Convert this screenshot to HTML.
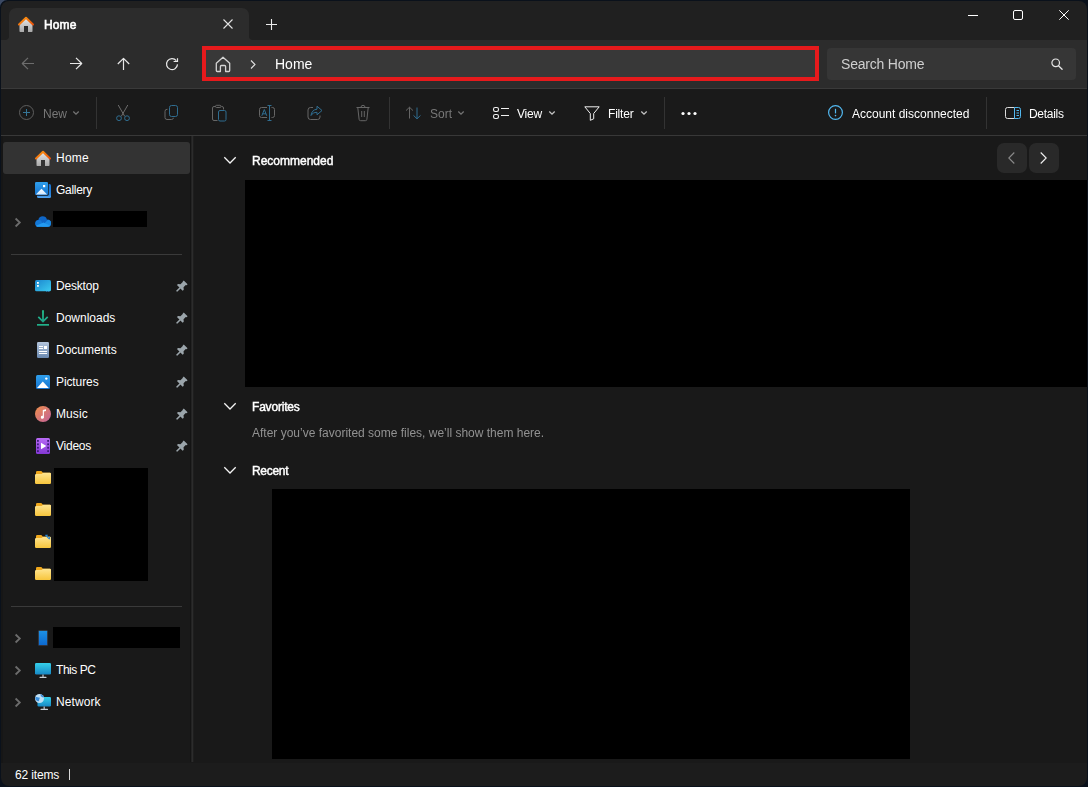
<!DOCTYPE html>
<html><head><meta charset="utf-8"><title>Home</title>
<style>
*{box-sizing:border-box;margin:0;padding:0}
html,body{width:1088px;height:787px;overflow:hidden;background:#191919;font-family:"Liberation Sans",sans-serif;color:#fff}
.win{position:absolute;left:0;top:0;width:1088px;height:787px;background:#191919;overflow:hidden}
.t{position:absolute;white-space:nowrap;line-height:16px;font-size:12px;color:#fff;height:16px}
.b{-webkit-text-stroke:.45px #fff}
svg{position:absolute;overflow:visible}
.titlebar{position:absolute;left:0;top:0;width:1088px;height:40px;background:#202020}
.tab{position:absolute;left:9px;top:8px;width:240px;height:32px;background:#2c2c2c;border-radius:7px 7px 0 0}
.navrow{position:absolute;left:0;top:40px;width:1088px;height:48px;background:#2c2c2c}
.addr{position:absolute;left:202px;top:46px;width:617px;height:35px;background:#383838;border:4px solid #e61a1c}
.search{position:absolute;left:827px;top:48px;width:249px;height:32px;background:#363636;border-radius:4px}
.cmd{position:absolute;left:0;top:88px;width:1088px;height:48px;background:#1a1a1a}
.vsep{position:absolute;width:1px;top:97px;height:32px;background:#333}
.sdiv{position:absolute;left:190px;top:136px;width:4px;height:626px;background:linear-gradient(90deg,#232323 0 1px,#2c2c2c 1px 2px,#1e1e1e 2px 3px);border-left:1px solid #141414}
.sel{position:absolute;left:3px;top:142px;width:187px;height:31.5px;background:#333;border-radius:3px}
.hsep{position:absolute;left:11px;width:171px;height:1px;background:#3a3a3a}
.black{position:absolute;background:#000}
.status{position:absolute;left:0;top:763px;width:1088px;height:24px;background:#1c1c1c}
.nbtn{position:absolute;top:143px;width:30px;height:30px;background:#292929;border-radius:7px}
.frame{position:absolute;left:1px;top:1px;width:1086px;height:785px;border-radius:8px;box-shadow:0 0 0 12px #0a111b;pointer-events:none}
.gs{will-change:transform}
.g{color:#787878}
</style></head><body>
<div class="win">

<!-- title bar -->
<div class="titlebar"></div>
<div class="tab"></div>
<svg style="left:5px;top:36px" width="4" height="4" viewBox="0 0 4 4"><path d="M4 0v4H0a4 4 0 0 0 4-4z" fill="#2c2c2c"/></svg>
<svg style="left:249px;top:36px" width="4" height="4" viewBox="0 0 4 4"><path d="M0 0v4h4a4 4 0 0 1-4-4z" fill="#2c2c2c"/></svg>
<!-- tab home icon -->
<svg style="left:18px;top:16px" width="16" height="16" viewBox="0 0 16 16">
<defs><linearGradient id="hg" x1="0" y1="0" x2="0" y2="1"><stop offset="0" stop-color="#e6e6e6"/><stop offset="1" stop-color="#a9a9a9"/></linearGradient>
<linearGradient id="ho" x1="0" y1="0" x2="1" y2="1"><stop offset="0" stop-color="#ff9a10"/><stop offset="1" stop-color="#e8500a"/></linearGradient></defs>
<path d="M1.500 8.500L8 2.300l6.500 6.200v6.700a.8.800 0 0 1-.8.800H10V10H6v6H2.300a.8.800 0 0 1-.8-.8z" fill="url(#hg)"/>
<path d="M1 8.500L8 1.800l7 6.700" fill="none" stroke="url(#ho)" stroke-width="2" stroke-linecap="round" stroke-linejoin="round"/>
</svg>
<div class="t gs b" id="tabtxt" style="left:44px;top:17px;-webkit-text-stroke:.6px #fff;letter-spacing:.1px">Home</div>
<svg style="left:223px;top:19px" width="10" height="10" viewBox="0 0 10 10"><path d="M.5.5l9 9M9.500.5l-9 9" stroke="#e4e4e4" stroke-width="1.100" fill="none"/></svg>
<svg style="left:266px;top:19px" width="11" height="11" viewBox="0 0 11 11"><path d="M5.500 0v11M0 5.500h11" stroke="#ececec" stroke-width="1.100" fill="none"/></svg>
<!-- window controls -->
<svg style="left:968px;top:15px" width="10" height="1" viewBox="0 0 10 1"><rect width="10" height="1" fill="#fff"/></svg>
<svg style="left:1013px;top:10px" width="10" height="10" viewBox="0 0 10 10"><rect x=".5" y=".5" width="9" height="9" rx="1.500" fill="none" stroke="#fff" stroke-width="1"/></svg>
<svg style="left:1059px;top:10px" width="10" height="10" viewBox="0 0 10 10"><path d="M.3.300l9.400 9.400M9.700.3L.3 9.700" stroke="#fff" stroke-width="1" fill="none"/></svg>

<!-- nav row -->
<div class="navrow"></div>
<svg style="left:22px;top:58px" width="12" height="12" viewBox="0 0 12 12"><path d="M12 5.500H.5M6 -.2L.3 5.500 6 11.200" stroke="#6d6d6d" stroke-width="1.200" fill="none" stroke-linejoin="round"/></svg>
<svg style="left:70px;top:58px" width="12" height="12" viewBox="0 0 12 12"><path d="M0 5.500h11.500M6 -.2l5.700 5.700L6 11.200" stroke="#e8e8e8" stroke-width="1.200" fill="none" stroke-linejoin="round"/></svg>
<svg style="left:118px;top:58px" width="12" height="12" viewBox="0 0 12 12"><path d="M5.500 12V.5M-.2 6L5.500 .3 11.200 6" stroke="#e8e8e8" stroke-width="1.200" fill="none" stroke-linejoin="round"/></svg>
<svg style="left:166px;top:58px" width="12" height="12" viewBox="0 0 12 12"><path d="M11.500 6.400A5.500 5.500 0 1 1 10.300 2.600M11.500 .2V3.500H7.600" stroke="#e8e8e8" stroke-width="1.200" fill="none"/></svg>
<div class="addr"></div>
<svg style="left:215px;top:56px" width="16" height="16" viewBox="0 0 16 16"><path d="M1.300 7.200L8 1.300l6.700 5.900v7.300a1 1 0 0 1-1 1H10.600V10.500a1 1 0 0 0-1-1H6.400a1 1 0 0 0-1 1v5H2.300a1 1 0 0 1-1-1z" fill="none" stroke="#d4d4d4" stroke-width="1.300" stroke-linejoin="round"/></svg>
<svg style="left:250px;top:60px" width="6" height="9" viewBox="0 0 6 9"><path d="M1 .5l4 4-4 4" stroke="#e0e0e0" stroke-width="1.100" fill="none"/></svg>
<div class="t gs" id="addrtxt" style="left:275px;top:55px;font-size:14px;line-height:18px;height:18px">Home</div>
<div class="search"></div>
<div class="t gs" id="srchtxt" style="left:841px;top:55px;font-size:14px;line-height:18px;height:18px;color:#cfcfcf;letter-spacing:-0.2px">Search Home</div>
<svg style="left:1051px;top:58px" width="12" height="12" viewBox="0 0 12 12"><circle cx="4.700" cy="4.800" r="3.800" fill="none" stroke="#e6e6e6" stroke-width="1.200"/><path d="M7.500 7.700l3.600 3.600" stroke="#e6e6e6" stroke-width="1.300" stroke-linecap="round"/></svg>

<!-- command bar -->
<div class="cmd"></div>
<div class="abs" style="position:absolute;left:1px;top:88px;width:1086px;height:1px;background:#3a3a3a"></div>
<div class="abs" style="position:absolute;left:1px;top:135px;width:1086px;height:1px;background:#383838"></div>

<svg style="left:19px;top:105px" width="15" height="15" viewBox="0 0 15 15"><circle cx="7.500" cy="7.500" r="7" fill="none" stroke="#5e5e5e" stroke-width="1"/><path d="M7.500 4v7M4 7.500h7" stroke="#357596" stroke-width="1"/></svg>
<div class="t gs g" id="newtxt" style="left:43px;top:106px">New</div>
<svg style="left:73px;top:111px" width="6" height="4" viewBox="0 0 6 4"><path d="M.3.500L3 3.200 5.700.5" stroke="#747474" stroke-width="1.300" fill="none"/></svg>
<div class="vsep" style="left:96px"></div>
<!-- cut -->
<svg style="left:115px;top:104px" width="16" height="18" viewBox="0 0 16 18"><path d="M3.200 1L9.700 12.300M12.800 1L6.300 12.300" stroke="#6c6c6c" stroke-width="1" fill="none"/><circle cx="4" cy="14.200" r="2.400" fill="none" stroke="#2f6d90" stroke-width="1"/><circle cx="12" cy="14.200" r="2.400" fill="none" stroke="#2f6d90" stroke-width="1"/></svg>
<!-- copy -->
<svg style="left:164px;top:105px" width="15" height="15" viewBox="0 0 15 15"><path d="M3.500 4.300H3a2 2 0 0 0-2 2v6.200a2 2 0 0 0 2 2h4.500a2 2 0 0 0 2-1.700" fill="none" stroke="#666" stroke-width="1"/><rect x="5.500" y=".5" width="8" height="11" rx="2" fill="none" stroke="#2f6d90" stroke-width="1"/></svg>
<!-- paste -->
<svg style="left:211px;top:104px" width="16" height="18" viewBox="0 0 16 18"><path d="M6.500 16.500H3a1.500 1.500 0 0 1-1.500-1.500V4A1.500 1.500 0 0 1 3 2.500h1.500M10.500 2.500H11A1.500 1.500 0 0 1 12.500 4v1.500" fill="none" stroke="#666" stroke-width="1"/><rect x="4.500" y="1.300" width="5.500" height="2.200" rx="1.100" fill="none" stroke="#666" stroke-width="1"/><rect x="7.500" y="6.500" width="7.500" height="10.500" rx="1.500" fill="none" stroke="#2f6d90" stroke-width="1"/></svg>
<!-- rename -->
<svg style="left:258px;top:104px" width="18" height="18" viewBox="0 0 18 18"><path d="M9 3.500H3.500A2 2 0 0 0 1.500 5.500v6a2 2 0 0 0 2 2H9M13.500 3.500h1a2 2 0 0 1 2 2v6a2 2 0 0 1-2 2h-1" fill="none" stroke="#666" stroke-width="1"/><path d="M11.500 1.500v15M9.500 1.500h4M9.500 16.500h4" stroke="#2f6d90" stroke-width="1" fill="none"/><path d="M3.800 11.800L6.300 5.500 8.800 11.800M4.600 9.800h3.400" stroke="#2f6d90" stroke-width="1" fill="none"/></svg>
<!-- share -->
<svg style="left:307px;top:105px" width="16" height="16" viewBox="0 0 16 16"><path d="M6 2.500H3.500A2.500 2.500 0 0 0 1 5v7a2.500 2.500 0 0 0 2.500 2.500h7A2.500 2.500 0 0 0 13 12v-1.500" fill="none" stroke="#666" stroke-width="1"/><path d="M10 1.200l5 4.300-5 4.300V7.300C7 7.300 5.200 8.500 4 10.500c.3-3.500 2.500-6 6-6.300z" fill="none" stroke="#2f6d90" stroke-width="1" stroke-linejoin="round"/></svg>
<!-- delete -->
<svg style="left:356px;top:104px" width="14" height="18" viewBox="0 0 14 18"><path d="M.5 3.500h13M5 3.300a2 2 0 0 1 4 0M1.800 3.800l1.300 11.500a1.500 1.500 0 0 0 1.500 1.400h4.800a1.500 1.500 0 0 0 1.500-1.400L12.200 3.800" fill="none" stroke="#666" stroke-width="1"/><path d="M5.700 7v6M8.300 7v6" stroke="#666" stroke-width="1"/></svg>
<div class="vsep" style="left:389px"></div>
<!-- sort -->
<svg style="left:405px;top:106px" width="17" height="14" viewBox="0 0 17 14"><path d="M4.500 12.500V1.200M1 4.600L4.500 1.200 8 4.600" stroke="#666" stroke-width="1" fill="none"/><path d="M12 1.500v11.300M8.500 9.400L12 12.800l3.500-3.400" stroke="#2f6d90" stroke-width="1" fill="none"/></svg>
<div class="t gs g" id="sorttxt" style="left:430px;top:106px">Sort</div>
<svg style="left:458px;top:111px" width="6" height="4" viewBox="0 0 6 4"><path d="M.3.500L3 3.200 5.700.5" stroke="#747474" stroke-width="1.300" fill="none"/></svg>
<!-- view -->
<svg style="left:493px;top:107px" width="16" height="12" viewBox="0 0 16 12"><rect x=".5" y=".5" width="5" height="4" rx="1.700" fill="none" stroke="#f0f0f0" stroke-width="1.100"/><rect x=".5" y="7.500" width="5" height="4" rx="1.700" fill="none" stroke="#f0f0f0" stroke-width="1.100"/><path d="M8 1.500h8M8 8.500h8" stroke="#f0f0f0" stroke-width="1"/></svg>
<div class="t gs" id="viewtxt" style="left:517px;top:106px;letter-spacing:-0.25px">View</div>
<svg style="left:549px;top:111px" width="6" height="4" viewBox="0 0 6 4"><path d="M.3.500L3 3.200 5.700.5" stroke="#c4c4c4" stroke-width="1.300" fill="none"/></svg>
<!-- filter -->
<svg style="left:584px;top:106px" width="16" height="15" viewBox="0 0 16 15"><path d="M.8.800h14.400L9.700 7.500v5.300l-3.400 1.500V7.500z" fill="none" stroke="#f0f0f0" stroke-width="1" stroke-linejoin="round"/></svg>
<div class="t gs" id="filttxt" style="left:608px;top:106px;letter-spacing:-0.2px">Filter</div>
<svg style="left:641px;top:111px" width="6" height="4" viewBox="0 0 6 4"><path d="M.3.500L3 3.200 5.700.5" stroke="#c4c4c4" stroke-width="1.300" fill="none"/></svg>
<div class="vsep" style="left:664px"></div>
<svg style="left:681px;top:112px" width="16" height="3" viewBox="0 0 16 3"><circle cx="2" cy="1.500" r="1.600" fill="#fff"/><circle cx="8" cy="1.500" r="1.600" fill="#fff"/><circle cx="14" cy="1.500" r="1.600" fill="#fff"/></svg>
<!-- account -->
<svg style="left:828px;top:105px" width="15" height="15" viewBox="0 0 15 15"><circle cx="7.500" cy="7.500" r="6.900" fill="none" stroke="#52b8f0" stroke-width="1.200"/><path d="M7.500 3.800v4.600" stroke="#52b8f0" stroke-width="1.200"/><circle cx="7.500" cy="10.600" r=".8" fill="#52b8f0"/></svg>
<div class="t gs" id="acctxt" style="left:852px;top:106px">Account disconnected</div>
<div class="vsep" style="left:986px"></div>
<!-- details -->
<svg style="left:1005px;top:107px" width="16" height="12" viewBox="0 0 16 12"><path d="M9.500.5H2.500A2 2 0 0 0 .5 2.500v7a2 2 0 0 0 2 2h7" fill="none" stroke="#dcdcdc" stroke-width="1"/><path d="M9.500.5h4a2 2 0 0 1 2 2v7a2 2 0 0 1-2 2h-4z" fill="none" stroke="#52b8f0" stroke-width="1"/><path d="M11.500 3.500h2.500M11.500 6h2.500M11.500 8.500h2.500" stroke="#52b8f0" stroke-width="1"/></svg>
<div class="t gs" id="dettxt" style="left:1029px;top:106px;letter-spacing:-0.3px">Details</div>

<!-- sidebar -->
<div class="sdiv"></div>
<div style="position:absolute;left:1px;top:136px;width:2px;height:627px;background:#161616"></div>
<div class="sel"></div>
<div class="hsep" style="top:254px"></div>
<div class="hsep" style="top:606px"></div>

<div class="t" style="left:56px;top:150px;letter-spacing:.25px">Home</div>
<div class="t" style="left:56px;top:182px;letter-spacing:-0.3px">Gallery</div>
<div class="t" style="left:56px;top:278px;letter-spacing:-0.2px">Desktop</div>
<div class="t" style="left:56px;top:310px">Downloads</div>
<div class="t" style="left:56px;top:342px">Documents</div>
<div class="t" style="left:56px;top:374px;letter-spacing:-0.1px">Pictures</div>
<div class="t" style="left:56px;top:406px;letter-spacing:0.1px">Music</div>
<div class="t" style="left:56px;top:438px;letter-spacing:-0.25px">Videos</div>
<div class="t" style="left:56px;top:662px;letter-spacing:-0.45px">This PC</div>
<div class="t" style="left:56px;top:694px;letter-spacing:0.1px">Network</div>

<!-- sidebar icons -->
<svg width="0" height="0" style="left:0;top:0"><defs>
<linearGradient id="gfold" x1="0" y1="0" x2="0" y2="1"><stop offset="0" stop-color="#ffe591"/><stop offset="1" stop-color="#f7c53c"/></linearGradient>
<linearGradient id="gdesk" x1="0" y1="0" x2="1" y2="1"><stop offset="0" stop-color="#1b86cf"/><stop offset="1" stop-color="#3ccbef"/></linearGradient>
<linearGradient id="gdl" x1="0" y1="0" x2="0" y2="1"><stop offset="0" stop-color="#23cf97"/><stop offset="1" stop-color="#1e9f86"/></linearGradient>
<linearGradient id="gdoc" x1="0" y1="0" x2="0" y2="1"><stop offset="0" stop-color="#b4c5dc"/><stop offset="1" stop-color="#6a89b0"/></linearGradient>
<linearGradient id="gpic" x1="0" y1="0" x2="0" y2="1"><stop offset="0" stop-color="#2f9fec"/><stop offset="1" stop-color="#1674cf"/></linearGradient>
<linearGradient id="gmus" x1="0" y1="0" x2="1" y2="1"><stop offset="0" stop-color="#f0904a"/><stop offset="1" stop-color="#c0609c"/></linearGradient>
<linearGradient id="gvid" x1="0" y1="0" x2="0" y2="1"><stop offset="0" stop-color="#b86af5"/><stop offset="1" stop-color="#8438d4"/></linearGradient>
<linearGradient id="gpc" x1="0" y1="0" x2="0" y2="1"><stop offset="0" stop-color="#35d0ea"/><stop offset="1" stop-color="#1788c6"/></linearGradient>
<linearGradient id="gph" x1="0" y1="0" x2="0" y2="1"><stop offset="0" stop-color="#1d92e6"/><stop offset="1" stop-color="#0c68cf"/></linearGradient>
<linearGradient id="gcl" x1="0" y1="0" x2="0" y2="1"><stop offset="0" stop-color="#0f6fd0"/><stop offset="1" stop-color="#1f9ae8"/></linearGradient>
<g id="pin"><path d="M7.300 .4l3.600 3.600-.9 .9-.8-.1-2.100 2.100 .2 2.300-1 1-2.500-2.500L.7 10.800l-.4-.4 3.100-3.100L.9 4.800l1-1 2.300 .2L6.300 1.900 6.400 1.300z" fill="#9ba5ab"/><path d="M.7 10.600L4 7.300" stroke="#9ba5ab" stroke-width="1.300"/></g>
<g id="fold"><path d="M1 1.200A1.200 1.200 0 0 1 2.200 0H6.300L8 1.800H14.800A1.200 1.200 0 0 1 16 3V4H1z" fill="#f0a81c"/><path d="M0 4.200A1.200 1.200 0 0 1 1.200 3H6.500L8.200 1.800H14.800A1.200 1.200 0 0 1 16 3v8.800A1.200 1.200 0 0 1 14.800 13H1.200A1.200 1.200 0 0 1 0 11.800z" fill="url(#gfold)"/></g>
<g id="chv"><path d="M.6 .5L4.800 4.500 .6 8.500" stroke="#6c6c6c" stroke-width="1.800" fill="none"/></g>
<g id="chd"><path d="M.3.300L6 6 11.700.3" stroke="#f4f4f4" stroke-width="1.300" fill="none"/></g>
</defs></svg>

<!-- Home -->
<svg style="left:35px;top:150px" width="16" height="16" viewBox="0 0 16 16"><path d="M1.500 8.500L8 2.300l6.500 6.200v6.700a.8.800 0 0 1-.8.800H10V10H6v6H2.300a.8.800 0 0 1-.8-.8z" fill="url(#hg)"/><path d="M1 8.500L8 1.800l7 6.700" fill="none" stroke="url(#ho)" stroke-width="2" stroke-linecap="round" stroke-linejoin="round"/></svg>
<!-- Gallery -->
<svg style="left:35px;top:182px" width="16" height="16" viewBox="0 0 16 16"><defs><linearGradient id="gback" x1="0" y1="0" x2="0" y2="1"><stop offset="0" stop-color="#1672d2"/><stop offset=".8" stop-color="#2a86de"/><stop offset="1" stop-color="#58a6ee"/></linearGradient><linearGradient id="gmnt" x1="0" y1="0" x2="0" y2="1"><stop offset="0" stop-color="#fff"/><stop offset="1" stop-color="#cfe6fb"/></linearGradient></defs><rect x="2" y="2" width="14" height="14" rx="1.500" fill="url(#gback)"/><rect x="0" y="0" width="13.700" height="13.700" rx="1.500" fill="#191919"/><rect x="0" y="0" width="13" height="13" rx="1.300" fill="url(#gpic)"/><path d="M.8 12.500L6.500 6.800 12.200 12.500z" fill="url(#gmnt)"/><rect x="8" y="3" width="2.200" height="2.200" fill="#fff"/></svg>
<!-- OneDrive -->
<svg style="left:35px;top:216px" width="16" height="11" viewBox="0 0 16 11"><defs><clipPath id="cl"><circle cx="3.600" cy="7.400" r="3.400"/><circle cx="7.700" cy="4.700" r="4.400"/><circle cx="12.400" cy="7.200" r="3.600"/><rect x="3.600" y="6" width="8.800" height="4.800"/></clipPath></defs><g clip-path="url(#cl)"><rect width="16" height="11" fill="#0f66c6"/><circle cx="3.600" cy="7.400" r="3.400" fill="#1478d6"/><path d="M6 11L13 3.500l4 2V11z" fill="#1a88e2"/><path d="M0 11L1.500 9.500 8.500 6.500 15.500 10 16 11z" fill="#239af0"/></g></svg>
<svg style="left:15px;top:218px" width="6" height="10" viewBox="0 0 6 10"><use href="#chv"/></svg>
<!-- Desktop -->
<svg style="left:35px;top:280px" width="16" height="12" viewBox="0 0 16 12"><rect width="16" height="11.300" rx="1.500" fill="url(#gdesk)"/><rect x="2" y="2" width="1.800" height="1.800" fill="#fff"/><rect x="2" y="5" width="1.800" height="1.800" fill="#fff"/><rect x="11.300" y="11" width="1" height="1" fill="#2a7fc0"/><rect x="13.300" y="11" width="1" height="1" fill="#2a7fc0"/></svg>
<!-- Downloads -->
<svg style="left:37px;top:310px" width="12" height="16" viewBox="0 0 12 16"><path d="M6 .3v11M1.300 6.800L6 11.500l4.700-4.700" stroke="url(#gdl)" stroke-width="1.700" fill="none"/><rect x="0" y="14" width="12" height="1.700" fill="#21b08a"/></svg>
<!-- Documents -->
<svg style="left:37px;top:342px" width="12" height="16" viewBox="0 0 12 16"><rect width="12" height="16" rx="1.200" fill="url(#gdoc)"/><path d="M2 4.500h4M2 6.500h4M2 9.500h8M2 11.500h8" stroke="#fff" stroke-width="1"/><rect x="7" y="4" width="3" height="3" fill="#fff"/></svg>
<!-- Pictures -->
<svg style="left:36px;top:375px" width="14" height="14" viewBox="0 0 14 14"><rect width="14" height="14" rx="1.500" fill="url(#gpic)"/><path d="M1 13l5.800-6.500L12.800 13z" fill="#fff"/><circle cx="10.300" cy="3.600" r="1.200" fill="#fff"/></svg>
<!-- Music -->
<svg style="left:35px;top:406px" width="16" height="16" viewBox="0 0 16 16"><circle cx="8" cy="8" r="8" fill="url(#gmus)"/><path d="M7.800 10.500V4l3.200-.8v1.800L8.900 5.500v5.200a1.600 1.500 0 1 1-1.100-.9z" fill="#fff"/></svg>
<!-- Videos -->
<svg style="left:36px;top:438px" width="14" height="16" viewBox="0 0 14 16"><rect width="14" height="16" rx="1.500" fill="url(#gvid)"/><path d="M5 4.800v6.400L10.300 8z" fill="#fff"/><g fill="#3d1c78"><rect x="1" y="2" width="1.800" height="1.800"/><rect x="1" y="5.400" width="1.800" height="1.800"/><rect x="1" y="8.800" width="1.800" height="1.800"/><rect x="1" y="12.200" width="1.800" height="1.800"/><rect x="11.200" y="2" width="1.800" height="1.800"/><rect x="11.200" y="5.400" width="1.800" height="1.800"/><rect x="11.200" y="8.800" width="1.800" height="1.800"/><rect x="11.200" y="12.200" width="1.800" height="1.800"/></g></svg>
<!-- folders -->
<svg style="left:35px;top:471px" width="16" height="13" viewBox="0 0 16 13"><use href="#fold"/></svg>
<svg style="left:35px;top:503px" width="16" height="13" viewBox="0 0 16 13"><use href="#fold"/></svg>
<svg style="left:35px;top:535px" width="16" height="13" viewBox="0 0 16 13"><use href="#fold"/><path d="M10.500 .2l4 4M10.300 .2h2.500M14.600 4.300V1.800" stroke="#2a8ad8" stroke-width="1.100" fill="none"/></svg>
<svg style="left:35px;top:567px" width="16" height="13" viewBox="0 0 16 13"><use href="#fold"/></svg>
<!-- pins -->
<svg style="left:176px;top:280px" width="12" height="12" viewBox="0 0 11.300 11.300"><use href="#pin"/></svg>
<svg style="left:176px;top:312px" width="12" height="12" viewBox="0 0 11.300 11.300"><use href="#pin"/></svg>
<svg style="left:176px;top:344px" width="12" height="12" viewBox="0 0 11.300 11.300"><use href="#pin"/></svg>
<svg style="left:176px;top:376px" width="12" height="12" viewBox="0 0 11.300 11.300"><use href="#pin"/></svg>
<svg style="left:176px;top:408px" width="12" height="12" viewBox="0 0 11.300 11.300"><use href="#pin"/></svg>
<svg style="left:176px;top:440px" width="12" height="12" viewBox="0 0 11.300 11.300"><use href="#pin"/></svg>
<!-- phone -->
<svg style="left:38px;top:630px" width="10" height="16" viewBox="0 0 10 16"><rect x=".4" y=".4" width="9.200" height="15.200" rx="1.200" fill="url(#gph)" stroke="#3a2f2c" stroke-width=".8"/></svg>
<svg style="left:15px;top:634px" width="6" height="10" viewBox="0 0 6 10"><use href="#chv"/></svg>
<!-- This PC -->
<svg style="left:35px;top:663px" width="16" height="15" viewBox="0 0 16 15"><rect width="16" height="11.500" rx="1.200" fill="url(#gpc)"/><rect x="7.300" y="11.500" width="1.400" height="2.500" fill="#a8b0b8"/><rect x="4.500" y="13.800" width="7" height="1.200" rx=".5" fill="#c8d0d6"/></svg>
<svg style="left:15px;top:666px" width="6" height="10" viewBox="0 0 6 10"><use href="#chv"/></svg>
<!-- Network -->
<svg style="left:35px;top:694px" width="16" height="17" viewBox="0 0 16 17"><rect x="2.500" y="3" width="13.500" height="9.500" rx="1.200" fill="url(#gpc)"/><rect x="8.500" y="12.500" width="1.400" height="2.500" fill="#a8b0b8"/><rect x="5.500" y="14.800" width="7.500" height="1.200" rx=".5" fill="#c8d0d6"/><circle cx="4.500" cy="4.500" r="4.500" fill="#bfe0f6"/><path d="M.6 3c1.500-.5 2.500 1 4 .5.500 1.500-1 2-.5 3.500-1.500 1-3-.5-3.800-2zM5.500 .3c1.500 .3 2.800 1.300 3.300 3-1 .5-2-.5-3-1z" fill="#3a8edc"/></svg>
<svg style="left:15px;top:698px" width="6" height="10" viewBox="0 0 6 10"><use href="#chv"/></svg>

<!-- heading chevrons -->
<svg style="left:224px;top:157px" width="12" height="7" viewBox="0 0 12 7"><use href="#chd"/></svg>
<svg style="left:224px;top:403px" width="12" height="7" viewBox="0 0 12 7"><use href="#chd"/></svg>
<svg style="left:224px;top:467px" width="12" height="7" viewBox="0 0 12 7"><use href="#chd"/></svg>

<!-- content -->
<div class="t gs b" style="left:252px;top:153px">Recommended</div>
<div class="t gs b" style="left:252px;top:399px;letter-spacing:-.2px">Favorites</div>
<div class="t gs b" style="left:252px;top:463px;letter-spacing:-.3px">Recent</div>
<div class="t gs" style="left:252px;top:425px;color:#929292">After you’ve favorited some files, we’ll show them here.</div>

<div class="black" style="left:245px;top:180px;width:843px;height:207px"></div>
<div class="black" style="left:272px;top:489px;width:638px;height:270px"></div>
<div class="black" style="left:53px;top:211px;width:94px;height:16px"></div>
<div class="black" style="left:54px;top:468px;width:94px;height:113px"></div>
<div class="black" style="left:53px;top:627px;width:127px;height:21px"></div>
<div class="nbtn" style="left:997px"></div><div class="nbtn" style="left:1029px"></div>

<svg style="left:1008px;top:152px" width="7" height="12" viewBox="0 0 7 12"><path d="M6.300 .5L.8 6l5.500 5.500" stroke="#8a8a8a" stroke-width="1.100" fill="none"/></svg>
<svg style="left:1040px;top:152px" width="7" height="12" viewBox="0 0 7 12"><path d="M.7 .5L6.200 6 .7 11.500" stroke="#f0f0f0" stroke-width="1.100" fill="none"/></svg>
<div class="status"></div>
<div class="t" style="left:15px;top:767px;letter-spacing:-0.15px">62 items</div>
<div style="position:absolute;left:69px;top:769px;width:1px;height:11px;background:#d8d8d8"></div>

<div class="frame"></div>
<svg style="left:0;top:0" width="8" height="8" viewBox="0 0 8 8"><path d="M0 0H7.500A7.500 7.500 0 0 0 0 7.500z" fill="#3b4963"/></svg>
</div>
</body></html>
